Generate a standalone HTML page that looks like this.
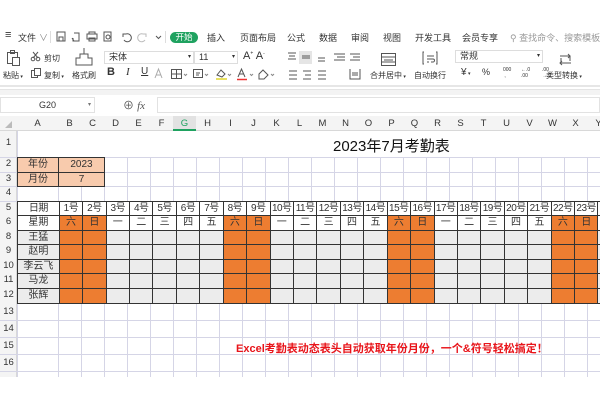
<!DOCTYPE html>
<html><head><meta charset="utf-8"><style>
*{margin:0;padding:0;box-sizing:border-box}
body{width:600px;height:400px;overflow:hidden;background:#fff;position:relative;font-family:"Liberation Sans","Noto Sans CJK SC",sans-serif;color:#333}
.a{position:absolute;white-space:nowrap}
.t{font-size:9px;color:#333;top:31px}
.r{font-size:8px;color:#333;top:70px}
.box{position:absolute;border:1px solid #ddd;background:#fff;font-size:9px;padding-left:4px;line-height:11px}
#grid2{position:absolute;left:58px;top:131px;width:542px;height:246px;background-image:repeating-linear-gradient(90deg,#d5d5e6 0 1px,transparent 1px 23px)}
.h{position:absolute;left:0;width:600px;height:1px;background:#d5d5e6}
.ch{position:absolute;top:117px;height:14px;font-size:9.5px;text-align:center;line-height:14px;color:#333}
.rh{position:absolute;left:0;width:17px;font-size:9.5px;text-align:center;color:#333}
table{position:absolute;border-collapse:collapse;table-layout:fixed;font-size:10px}
td{border:1px solid #333;text-align:center;padding:0;overflow:hidden;white-space:nowrap;line-height:12px}
#tb td{width:23px}
#tb td:first-child{width:41px}
#tb tr.g td{background:#ececec}
#tb tr.o td:nth-child(2),#tb tr.o td:nth-child(3),#tb tr.o td:nth-child(9),#tb tr.o td:nth-child(10),#tb tr.o td:nth-child(16),#tb tr.o td:nth-child(17),#tb tr.o td:nth-child(23),#tb tr.o td:nth-child(24){background:#ed7d31}
#tb tr.d td{letter-spacing:-0.5px;font-size:10px}
</style></head><body>
<!-- tab row -->
<div class="a" style="left:5px;top:29px;font-size:11px">≡</div>
<div class="a t" style="left:18px">文件</div>
<div class="a t" style="left:39px;color:#888">∨</div>
<div class="a" style="left:50px;top:31px;width:1px;height:12px;background:#ddd"></div>
<div class="a" style="left:165px;top:31px;width:1px;height:12px;background:#ddd"></div>
<div class="a" style="left:170px;top:32px;width:28px;height:11px;border-radius:6px;background:#1fa260;color:#fff;font-size:8.5px;text-align:center;line-height:11px">开始</div>
<div class="a t" style="left:207px">插入</div>
<div class="a t" style="left:240px">页面布局</div>
<div class="a t" style="left:287px">公式</div>
<div class="a t" style="left:319px">数据</div>
<div class="a t" style="left:351px">审阅</div>
<div class="a t" style="left:383px">视图</div>
<div class="a t" style="left:415px">开发工具</div>
<div class="a t" style="left:462px">会员专享</div>
<div class="a t" style="left:510px;color:#999">⚲ 查找命令、搜索模板</div>
<div class="a" style="left:299px;top:51px;width:13px;height:13px;background:#e5e5e5"></div>
<svg class="a" style="left:0;top:0" width="600" height="95" fill="none" stroke="#555" stroke-width="1">
<rect x="57" y="32" width="8" height="9"/><rect x="59" y="37" width="4" height="4"/>
<path d="M74 33h5v8h-6v-3M72 38l2 3"/>
<rect x="87" y="34" width="10" height="5"/><rect x="89" y="32" width="6" height="2"/><rect x="89" y="38" width="6" height="3"/>
<rect x="104" y="32" width="7" height="9"/><circle cx="108" cy="37" r="2"/>
<path d="M126 34a4 4 0 1 1 -2 6M126 34h-3v3"/>
<path stroke="#bbb" d="M143 34a4 4 0 1 0 2 6M143 34h3v3"/>
<path d="M156 36l2.5 2.5l2.5-2.5"/>
<rect x="7.5" y="52.5" width="10" height="11"/><rect x="10.5" y="50.5" width="4" height="3"/><rect x="12.5" y="57.5" width="7" height="8" fill="#fff"/>
<circle cx="33" cy="59" r="1.8"/><circle cx="38" cy="59" r="1.8"/><path d="M33 52l5 6M38 52l-5 6"/>
<rect x="31.5" y="70.5" width="6" height="7"/><rect x="34.5" y="68.5" width="6" height="7" fill="#fff"/>
<path d="M84 48v6M80 54h8v4h4v7h-16v-7h4z"/>
<path stroke="#aaa" d="M155 78l3.5-9l3.5 9M156 75h5"/>
<rect x="171.5" y="69.5" width="10" height="9"/><path d="M176.5 69v10M171 74h11"/><path stroke="#888" d="M184 74l1.5 1.5l1.5-1.5"/>
<rect x="193.5" y="69.5" width="9" height="8"/><path d="M196 73h4M196 75h3"/><path stroke="#888" d="M205 74l1.5 1.5l1.5-1.5"/>
<path d="M217 75l4-5l4 4l-3 3z"/><path stroke="#e8e060" stroke-width="2" d="M216 79h11"/><path stroke="#888" d="M228 74l1.5 1.5l1.5-1.5"/>
<path d="M238 77l3.5-8l3.5 8M239.5 74h4"/><path stroke="#e33" stroke-width="1.5" d="M237 79.5h10"/><path stroke="#888" d="M250 74l1.5 1.5l1.5-1.5"/>
<path d="M259 74l4-4l5 5l-4 4h-5z"/><path stroke="#888" d="M271 74l1.5 1.5l1.5-1.5"/>
<path d="M288 53h8M289 56h6M288 59h8M302 56h8M302 58h8M318 58h7M318 61h7M334 54h11M337 57h8M334 60h11M350 54h10M353 57h7M350 60h10"/>
<path d="M289 71h8M289 75h8M289 79h8M303 71h8M305 75h6M303 79h8M318 71h8M318 75h8M318 79h8M350 69v10h10v-10M352 73h6M352 75h6"/>
<rect x="381.5" y="53.5" width="14" height="12"/><path d="M381 57h15M381 62h15M384 60h9"/>
<path d="M424 52h-1v12h1M436 52h1v12h-1M427 56h7M427 59h6a1.5 1.5 0 0 1 0 3h-2M427 62h2"/>
<path d="M560 56h10v5M571 63h-10v-5M568 54l2 2-2 2M562 61l-2 2 2 2"/>
<path stroke="#ccc" d="M0 86h600"/>
</svg>
<div class="a" style="left:107px;top:66px;font-size:11px;font-weight:bold">B</div>
<div class="a" style="left:126px;top:66px;font-size:11px;font-style:italic;font-family:'Liberation Serif',serif">I</div>
<div class="a" style="left:141px;top:66px;font-size:10px;text-decoration:underline">U</div>
<div class="a r" style="left:44px;top:53px">剪切</div>
<div class="a r" style="left:3px">粘贴<span style="font-size:5px"> ▾</span></div>
<div class="a r" style="left:44px">复制<span style="font-size:5px"> ▾</span></div>
<div class="a r" style="left:72px">格式刷</div>
<div class="box" style="left:104px;top:51px;width:90px;height:13px">宋体<span style="float:right;padding-right:2px;font-size:6px">▾</span></div>
<div class="box" style="left:194px;top:51px;width:44px;height:13px">11<span style="float:right;padding-right:2px;font-size:6px">▾</span></div>
<div class="a" style="left:243px;top:50px;font-size:11px">A<sup style="font-size:5px">+</sup> A<sup style="font-size:5px">-</sup></div>
<div class="a r" style="left:370px">合并居中<span style="font-size:5px"> ▾</span></div>
<div class="a r" style="left:414px">自动换行</div>
<div class="box" style="left:455px;top:50px;width:88px;height:13px">常规<span style="float:right;padding-right:2px;font-size:6px">▾</span></div>
<div class="a" style="left:461px;top:67px;font-size:10px;color:#333">¥<span style="font-size:5px"> ▾</span></div>
<div class="a" style="left:482px;top:67px;font-size:9px;color:#333">%</div>
<div class="a" style="left:503px;top:67px;font-size:5px;line-height:6px;color:#333">000<br>&nbsp;,</div>
<div class="a" style="left:521px;top:67px;font-size:5px;line-height:6px;color:#333">←.0<br>.00</div>
<div class="a" style="left:542px;top:67px;font-size:5px;line-height:6px;color:#333">.00<br>→.0</div>
<div class="a r" style="left:546px">类型转换<span style="font-size:5px"> ▾</span></div>
<div class="a" style="left:0;top:89px;width:600px;height:6px;background:#f3f3f3;border-top:1px solid #e4e4e4"></div>
<div class="a" style="left:0;top:97px;width:95px;height:16px;border:1px solid #e2e2e2;font-size:9px;text-align:center;line-height:14px">G20<span style="position:absolute;right:3px;font-size:6px;color:#777">▾</span></div>
<div class="a" style="left:123px;top:97px;font-size:11px;color:#555">⊕ <i style="font-family:'Liberation Serif',serif">fx</i></div>
<div class="a" style="left:157px;top:97px;width:443px;height:16px;border:1px solid #e2e2e2"></div>
<div class="a" style="left:0;top:116px;width:600px;height:15px;background:#f4f4f4;border-bottom:1px solid #d8d8d8"></div>
<div class="a" style="left:5px;top:121px;width:0;height:0;border-left:7px solid transparent;border-bottom:7px solid #bbb"></div>
<div class="a" style="left:173px;top:116px;width:23px;height:15px;background:#e2e2e2;border-bottom:2px solid #1fa260"></div>
<div class="ch" style="left:17px;width:41px">A</div>
<div class="ch" style="left:58px;width:23px">B</div><div class="ch" style="left:81px;width:23px">C</div><div class="ch" style="left:104px;width:23px">D</div><div class="ch" style="left:127px;width:23px">E</div><div class="ch" style="left:150px;width:23px">F</div><div class="ch" style="left:173px;width:23px;color:#1fa260">G</div><div class="ch" style="left:196px;width:23px">H</div><div class="ch" style="left:219px;width:23px">I</div><div class="ch" style="left:242px;width:23px">J</div><div class="ch" style="left:265px;width:23px">K</div><div class="ch" style="left:288px;width:23px">L</div><div class="ch" style="left:311px;width:23px">M</div><div class="ch" style="left:334px;width:23px">N</div><div class="ch" style="left:357px;width:23px">O</div><div class="ch" style="left:380px;width:23px">P</div><div class="ch" style="left:403px;width:23px">Q</div><div class="ch" style="left:426px;width:23px">R</div><div class="ch" style="left:449px;width:23px">S</div><div class="ch" style="left:472px;width:23px">T</div><div class="ch" style="left:495px;width:23px">U</div><div class="ch" style="left:518px;width:23px">V</div><div class="ch" style="left:541px;width:23px">W</div><div class="ch" style="left:564px;width:23px">X</div><div class="ch" style="left:587px;width:23px">Y</div>
<div id="grid2"></div>
<div class="a" style="left:17px;top:131px;width:1px;height:246px;background:#d5d5e6"></div>
<div class="a" style="left:0;top:131px;width:17px;height:246px;background:#f4f4f4;border-right:1px solid #d8d8d8"></div>
<div class="h" style="top:157px"></div><div class="h" style="top:172px"></div><div class="h" style="top:186px"></div><div class="h" style="top:201px"></div><div class="h" style="top:320px"></div><div class="h" style="top:337px"></div><div class="h" style="top:354px"></div><div class="h" style="top:371px"></div>
<div class="a" style="left:18px;top:131px;width:582px;height:26px;background:#fff"></div>
<div class="rh" style="top:137px">1</div><div class="rh" style="top:158px">2</div><div class="rh" style="top:173px">3</div><div class="rh" style="top:187px">4</div><div class="rh" style="top:202px">5</div><div class="rh" style="top:216px">6</div><div class="rh" style="top:231px">8</div><div class="rh" style="top:245px">9</div><div class="rh" style="top:260px">10</div><div class="rh" style="top:274px">11</div><div class="rh" style="top:289px">12</div><div class="rh" style="top:306px">13</div><div class="rh" style="top:323px">14</div><div class="rh" style="top:340px">15</div><div class="rh" style="top:357px">16</div>
<div class="a" style="left:333px;top:135px;font-size:15px;color:#111">2023年7月考勤表</div>
<table style="left:17px;top:157px;width:88px">
<tr style="height:15px;background:#f8cbad"><td style="width:41px">年份</td><td style="width:46px">2023</td></tr>
<tr style="height:14px;background:#f8cbad"><td>月份</td><td>7</td></tr>
</table>
<table id="tb" style="left:17px;top:201px;width:605px;background:#fff">
<tr class="d" style="height:14px"><td>日期</td><td>1号</td><td>2号</td><td>3号</td><td>4号</td><td>5号</td><td>6号</td><td>7号</td><td>8号</td><td>9号</td><td>10号</td><td>11号</td><td>12号</td><td>13号</td><td>14号</td><td>15号</td><td>16号</td><td>17号</td><td>18号</td><td>19号</td><td>20号</td><td>21号</td><td>22号</td><td>23号</td><td>24号</td></tr>
<tr class="o" style="height:15px"><td>星期</td><td>六</td><td>日</td><td>一</td><td>二</td><td>三</td><td>四</td><td>五</td><td>六</td><td>日</td><td>一</td><td>二</td><td>三</td><td>四</td><td>五</td><td>六</td><td>日</td><td>一</td><td>二</td><td>三</td><td>四</td><td>五</td><td>六</td><td>日</td><td>一</td></tr>
<tr class="g o" style="height:14px"><td>王猛</td><td></td><td></td><td></td><td></td><td></td><td></td><td></td><td></td><td></td><td></td><td></td><td></td><td></td><td></td><td></td><td></td><td></td><td></td><td></td><td></td><td></td><td></td><td></td><td></td></tr>
<tr class="g o" style="height:15px"><td>赵明</td><td></td><td></td><td></td><td></td><td></td><td></td><td></td><td></td><td></td><td></td><td></td><td></td><td></td><td></td><td></td><td></td><td></td><td></td><td></td><td></td><td></td><td></td><td></td><td></td></tr>
<tr class="g o" style="height:14px"><td>李云飞</td><td></td><td></td><td></td><td></td><td></td><td></td><td></td><td></td><td></td><td></td><td></td><td></td><td></td><td></td><td></td><td></td><td></td><td></td><td></td><td></td><td></td><td></td><td></td><td></td></tr>
<tr class="g o" style="height:15px"><td>马龙</td><td></td><td></td><td></td><td></td><td></td><td></td><td></td><td></td><td></td><td></td><td></td><td></td><td></td><td></td><td></td><td></td><td></td><td></td><td></td><td></td><td></td><td></td><td></td><td></td></tr>
<tr class="g o" style="height:15px"><td>张辉</td><td></td><td></td><td></td><td></td><td></td><td></td><td></td><td></td><td></td><td></td><td></td><td></td><td></td><td></td><td></td><td></td><td></td><td></td><td></td><td></td><td></td><td></td><td></td><td></td></tr>
</table>
<div class="a" style="left:236px;top:340px;font-size:11px;font-weight:bold;color:#e8141a">Excel考勤表动态表头自动获取年份月份，一个&amp;符号轻松搞定！</div>
<div class="a" style="left:0;top:377px;width:600px;height:23px;background:#fff"></div>
</body></html>
